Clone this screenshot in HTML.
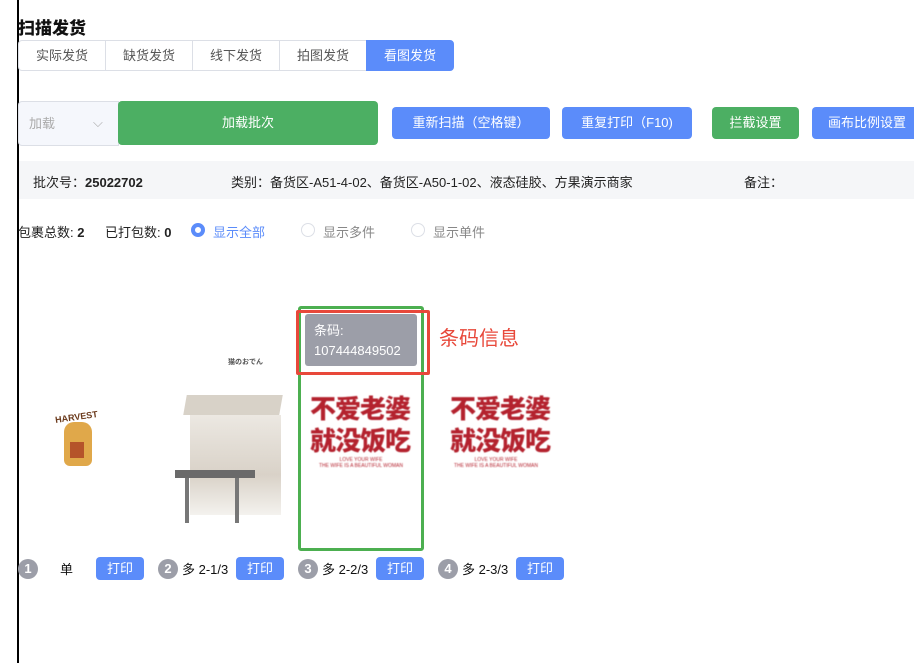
<!DOCTYPE html>
<html><head><meta charset="utf-8"><style>
*{box-sizing:border-box;margin:0;padding:0}
body{width:914px;height:663px;background:#fff;font-family:"Liberation Sans","Noto Sans CJK SC",sans-serif;font-size:13px;color:#333;position:relative;overflow:hidden}
.a{position:absolute}
.vl{left:17px;top:0;width:2px;height:663px;background:#000}
.tab{top:40px;height:31px;border:1px solid #dcdfe6;line-height:29px;text-align:center;color:#555;font-size:13px;width:88px}
.btn{color:#fff;text-align:center;border-radius:4px;font-size:13px}
.blue{background:#5b8cfa}
.green{background:#4caf63}
.radio{width:14px;height:14px;border-radius:50%;border:1px solid #dcdfe6;top:223px}
.num{width:20px;height:20px;border-radius:50%;background:#9c9ea8;color:#fff;font-weight:bold;text-align:center;line-height:20px;font-size:13px;top:559px}
.pb{top:557px;width:48px;height:23px;line-height:23px}
.red{color:#b4222e;font-weight:900;font-size:26px;line-height:32px;filter:blur(.6px);letter-spacing:-1px}
.small{color:#b4222e;font-size:5px;text-align:center;filter:blur(.4px)}
.lb{top:559px;color:#111}
</style></head><body>
<div class="a vl"></div>
<div class="a" style="left:18px;top:14px;font-size:17px;font-weight:900;color:#111">扫描发货</div>
<div class="a tab" style="left:18px;border-radius:4px 0 0 4px">实际发货</div>
<div class="a tab" style="left:105px">缺货发货</div>
<div class="a tab" style="left:192px">线下发货</div>
<div class="a tab" style="left:279px">拍图发货</div>
<div class="a tab" style="left:366px;background:#5b8cfa;color:#fff;border-color:#5b8cfa;border-radius:0 4px 4px 0">看图发货</div>

<div class="a" style="left:18px;top:101px;width:101px;height:45px;background:#f5f7fc;border:1px solid #dcdfe6;border-radius:4px 0 0 4px;color:#aaa;line-height:43px;padding-left:10px">加载<span style="position:absolute;left:74px;top:-1px;color:#aaa">⌵</span></div>
<div class="a btn green" style="left:118px;top:101px;width:260px;height:44px;line-height:44px">加载批次</div>
<div class="a btn blue" style="left:392px;top:107px;width:158px;height:32px;line-height:32px">重新扫描（空格键）</div>
<div class="a btn blue" style="left:562px;top:107px;width:130px;height:32px;line-height:32px">重复打印（F10)</div>
<div class="a btn green" style="left:712px;top:107px;width:87px;height:32px;line-height:32px">拦截设置</div>
<div class="a btn blue" style="left:812px;top:107px;width:110px;height:32px;line-height:32px;text-align:left;padding-left:16px">画布比例设置</div>

<div class="a" style="left:19px;top:161px;width:895px;height:38px;background:#f5f6f8"></div>
<div class="a" style="left:33px;top:172px;color:#222">批次号：<b>25022702</b></div>
<div class="a" style="left:231px;top:172px;color:#222">类别：备货区-A51-4-02、备货区-A50-1-02、液态硅胶、方果演示商家</div>
<div class="a" style="left:744px;top:172px;color:#222">备注：</div>

<div class="a" style="left:18px;top:222px;color:#222">包裹总数: <b>2</b></div>
<div class="a" style="left:105px;top:222px;color:#222">已打包数: <b>0</b></div>
<div class="a radio" style="left:191px;border:4px solid #5b8cfa"></div>
<div class="a" style="left:213px;top:222px;color:#5b8cfa">显示全部</div>
<div class="a radio" style="left:301px"></div>
<div class="a" style="left:323px;top:222px;color:#888">显示多件</div>
<div class="a radio" style="left:411px"></div>
<div class="a" style="left:433px;top:222px;color:#888">显示单件</div>

<div class="a" style="left:55px;top:412px;font-size:9px;font-weight:bold;color:#6b3a1c;transform:rotate(-8deg)">HARVEST</div>
<div class="a" style="left:64px;top:422px;width:28px;height:44px;background:#e0a84a;border-radius:10px 10px 6px 6px"></div>
<div class="a" style="left:70px;top:442px;width:14px;height:16px;background:#b5532a"></div>
<div class="a" style="left:228px;top:357px;font-size:7px;color:#555;font-weight:bold">猫のおでん</div>
<div class="a" style="left:185px;top:395px;width:96px;height:20px;background:#d8d2c8;transform:skewX(-10deg)"></div>
<div class="a" style="left:190px;top:415px;width:91px;height:100px;background:linear-gradient(#ece8e2,#d9d2c8 60%,#f4f2ee)"></div>
<div class="a" style="left:175px;top:470px;width:80px;height:8px;background:#6a6a6a"></div>
<div class="a" style="left:185px;top:478px;width:4px;height:45px;background:#777"></div>
<div class="a" style="left:235px;top:478px;width:4px;height:45px;background:#777"></div>

<div class="a" style="left:298px;top:306px;width:126px;height:245px;border:3px solid #4caf50;border-radius:3px"></div>
<div class="a red" style="left:310px;top:393px">不爱老婆<br>就没饭吃</div>
<div class="a small" style="left:308px;top:457px;width:106px">LOVE YOUR WIFE<br>THE WIFE IS A BEAUTIFUL WOMAN</div>
<div class="a" style="left:305px;top:314px;width:112px;height:52px;background:#9c9ea8;border-radius:3px;color:#fff;font-size:13px;line-height:20px;padding:7px 9px">条码:<br>107444849502</div>
<div class="a" style="left:296px;top:310px;width:134px;height:65px;border:3px solid #e8483a;border-radius:2px"></div>
<div class="a" style="left:439px;top:322px;color:#e8483a;font-size:20px">条码信息</div>
<div class="a red" style="left:450px;top:393px">不爱老婆<br>就没饭吃</div>
<div class="a small" style="left:440px;top:457px;width:112px">LOVE YOUR WIFE<br>THE WIFE IS A BEAUTIFUL WOMAN</div>

<div class="a num" style="left:18px">1</div>
<div class="a lb" style="left:60px">单</div>
<div class="a btn blue pb" style="left:96px">打印</div>
<div class="a num" style="left:158px">2</div>
<div class="a lb" style="left:182px">多 2-1/3</div>
<div class="a btn blue pb" style="left:236px">打印</div>
<div class="a num" style="left:298px">3</div>
<div class="a lb" style="left:322px">多 2-2/3</div>
<div class="a btn blue pb" style="left:376px">打印</div>
<div class="a num" style="left:438px">4</div>
<div class="a lb" style="left:462px">多 2-3/3</div>
<div class="a btn blue pb" style="left:516px">打印</div>
</body></html>
